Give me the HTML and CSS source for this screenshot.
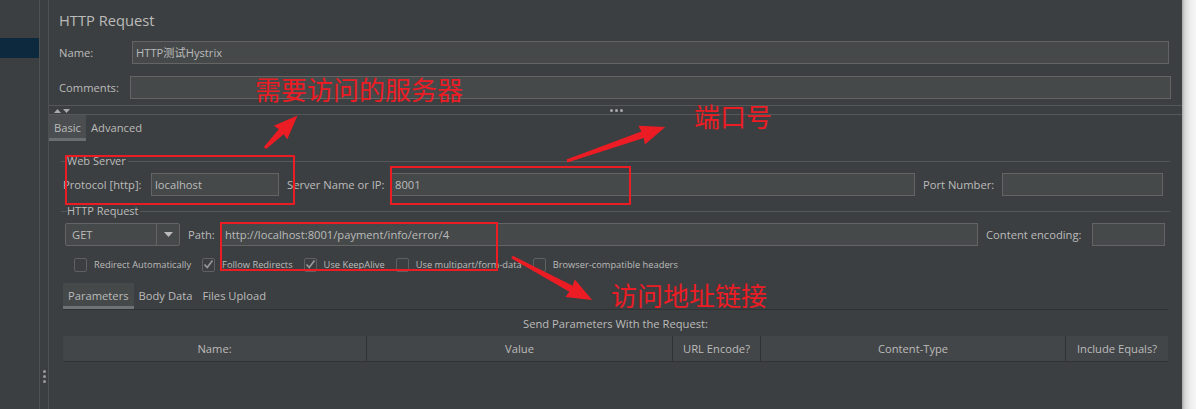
FILE: index.html
```html
<!DOCTYPE html>
<html>
<head>
<meta charset="utf-8">
<link rel="stylesheet" href="styles.css">
</head>
<body>
<div class="screen">
  <div class="window">
    <div class="tree">
      <div class="tree-sel"></div>
    </div>
    <div class="vsplit">
      <span class="vdot"></span><span class="vdot"></span><span class="vdot"></span>
    </div>
    <div class="main">
      <div class="head">
        <div class="title">HTTP Request</div>
        <div class="row name-row">
          <span class="lbl lbl-name">Name:</span>
          <div class="input grow">HTTP测试Hystrix</div>
        </div>
        <div class="row comments-row">
          <span class="lbl lbl-comments">Comments:</span>
          <div class="input grow"></div>
        </div>
      </div>
      <div class="hsplit">
        <div class="hs-arrows">
          <svg width="16" height="6" viewBox="0 0 16 6"><path d="M0 5 L3.5 1 L7 5 Z" fill="#a9a9a9"/><path d="M9 1 L16 1 L12.5 5 Z" fill="#a9a9a9"/></svg>
        </div>
        <div class="hs-dots"><span></span><span></span><span></span></div>
      </div>
      <div class="tabs">
        <div class="tab active">Basic</div>
        <div class="tab">Advanced</div>
      </div>
      <div class="content">
        <div class="legend"><span class="lg-pre"></span><span class="lg-txt">Web Server</span><span class="lg-line"></span></div>
        <div class="row ws-row">
          <span class="lbl w-proto">Protocol [http]:</span>
          <div class="input w128">localhost</div>
          <span class="lbl w-server">Server Name or IP:</span>
          <div class="input grow">8001</div>
          <span class="lbl w-port">Port Number:</span>
          <div class="input w161"></div>
        </div>
        <div class="legend legend2"><span class="lg-pre"></span><span class="lg-txt">HTTP Request</span><span class="lg-line"></span></div>
        <div class="row req-row">
          <div class="combo"><span class="combo-val">GET</span><span class="combo-btn"><svg width="9" height="5" viewBox="0 0 9 5"><path d="M0 0 L9 0 L4.5 5 Z" fill="#bbbbbb"/></svg></span></div>
          <span class="lbl w-path">Path:</span>
          <div class="input grow">http://localhost:8001/payment/info/error/4</div>
          <span class="lbl w-enc">Content encoding:</span>
          <div class="input w73"></div>
        </div>
        <div class="checks">
          <label class="chk"><span class="box"></span>Redirect Automatically</label>
          <label class="chk"><span class="box"><svg width="11" height="11" viewBox="0 0 11 11"><path d="M1.5 5.5 L4.2 8.5 L9.5 1.5" fill="none" stroke="#9a9a9a" stroke-width="1.6"/></svg></span>Follow Redirects</label>
          <label class="chk"><span class="box"><svg width="11" height="11" viewBox="0 0 11 11"><path d="M1.5 5.5 L4.2 8.5 L9.5 1.5" fill="none" stroke="#9a9a9a" stroke-width="1.6"/></svg></span>Use KeepAlive</label>
          <label class="chk"><span class="box"></span>Use multipart/form-data</label>
          <label class="chk"><span class="box"></span>Browser-compatible headers</label>
        </div>
        <div class="subtabs">
          <div class="stab active">Parameters</div>
          <div class="stab">Body Data</div>
          <div class="stab">Files Upload</div>
        </div>
        <div class="send">Send Parameters With the Request:</div>
        <div class="thead">
          <div class="th">Name:</div>
          <div class="th">Value</div>
          <div class="th">URL Encode?</div>
          <div class="th">Content-Type</div>
          <div class="th last">Include Equals?</div>
        </div>
      </div>
    </div>
  </div>
  <div class="shadow"></div>

  <div class="mark box1"></div>
  <div class="mark box2"></div>
  <div class="mark box3"></div>
  <div class="note note1">需要访问的服务器</div>
  <div class="note note2">端口号</div>
  <div class="note note3">访问地址链接</div>
  <svg class="arrows" width="1196" height="409" viewBox="0 0 1196 409">
    <g transform="translate(265 148) rotate(-45)">
      <polygon points="0,-1.5 23,-3.5 22,-9.5 46,0 22,9.5 23,3.5 0,1.5" fill="#ec1c24"/>
    </g>
    <g transform="translate(567 161) rotate(-19.13)">
      <polygon points="0,-1.5 80,-3.5 79,-10 104,0 79,10 80,3.5 0,1.5" fill="#ec1c24"/>
    </g>
    <g transform="translate(512 257) rotate(28.26)">
      <polygon points="0,-1.5 67,-3.5 66,-10 91,0 66,10 67,3.5 0,1.5" fill="#ec1c24"/>
    </g>
  </svg>
</div>
</body>
</html>
```
FILE: styles.css
```css
* { box-sizing: border-box; }
html, body { margin: 0; padding: 0; }
body {
  width: 1196px;
  height: 409px;
  overflow: hidden;
  font-family: "Open Sans", "Noto Sans CJK SC", sans-serif;
  font-size: 11.2px;
  color: #bbbbbb;
  background: #3c3f41;
}
.screen {
  position: relative;
  width: 1196px;
  height: 409px;
  display: flex;
}
.window {
  width: 1182px;
  height: 409px;
  display: flex;
  background: #3c3f41;
}
.shadow {
  flex: 1;
  background: linear-gradient(to right, #a9a9a9 0, #d6d6d6 3px, #ececec 8px, #f6f6f6 100%);
}
.tree {
  width: 40px;
  border-right: 1px solid #4e5052;
  padding-top: 38px;
}
.tree-sel {
  height: 20px;
  background: #0d293e;
}
.vsplit {
  width: 9px;
  border-right: 1px solid #4e5052;
  display: flex;
  flex-direction: column;
  align-items: center;
  padding-top: 370px;
  gap: 2px;
}
.vdot {
  width: 3px;
  height: 3px;
  border-radius: 50%;
  background: #9a9a9a;
}
.main {
  flex: 1;
  display: flex;
  flex-direction: column;
}
.head {
  padding: 0 11px 0 10px;
}
.title {
  font-size: 14.7px;
  line-height: 20px;
  padding-top: 10px;
  height: 41px;
}
.row {
  display: flex;
  align-items: center;
}
.lbl { white-space: nowrap; }
.input {
  height: 23px;
  background: #45494a;
  border: 1px solid #646464;
  line-height: 21px;
  padding-left: 3px;
  white-space: nowrap;
  overflow: hidden;
}
.grow { flex: 1; }
.lbl-name { width: 73px; }
.name-row .input { margin-right: 2px; }
.comments-row { margin-top: 12px; }
.lbl-comments { width: 71px; }

.hsplit {
  margin-top: 6px;
  height: 10px;
  border-top: 1px solid #555759;
  border-bottom: 1px solid #555759;
  display: flex;
  align-items: center;
  position: relative;
}
.hs-arrows {
  padding-left: 5px;
  padding-top: 1px;
  display: flex;
}
.hs-dots {
  position: absolute;
  left: 561px;
  top: 3px;
  display: flex;
  gap: 2px;
}
.hs-dots span {
  width: 3px;
  height: 3px;
  border-radius: 50%;
  background: #a9a9a9;
}
.tabs {
  display: flex;
  height: 26px;
}
.tab {
  padding: 2px 5px 0 5px;
  line-height: 22px;
  height: 26px;
}
.tab.active {
  background: #4a4e50;
  border-bottom: 3px solid #6b6e70;
}
.content {
  padding: 0 12px;
}
.legend {
  display: flex;
  align-items: center;
  height: 14px;
  margin-top: 13px;
  font-size: 11px;
}
.legend2 { margin-top: 8px; }
.lg-pre {
  width: 6px;
  height: 1px;
  background: #555759;
}
.lg-txt {
  padding: 0 2px 0 0;
  line-height: 14px;
}
.lg-line {
  flex: 1;
  height: 1px;
  background: #555759;
}
.ws-row { margin-top: 5px; padding-left: 2px; padding-right: 7px; }
.w-proto { width: 88px; }
.w128 { width: 128px; }
.w-server { width: 104px; margin-left: 8px; }
.w-port { width: 79px; margin-left: 8px; }
.w161 { width: 161px; }

.req-row { margin-top: 5px; padding-left: 4px; padding-right: 5px; }
.combo {
  width: 115px;
  height: 23px;
  border: 1px solid #646464;
  border-radius: 2px;
  background: #45494a;
  display: flex;
}
.combo-val {
  flex: 1;
  padding-left: 6px;
  line-height: 21px;
  border-right: 1px solid #646464;
}
.combo-btn {
  width: 22px;
  display: flex;
  align-items: center;
  justify-content: center;
}
.w-path { width: 33px; margin-left: 8px; }
.w-enc { width: 106px; margin-left: 8px; }
.w73 { width: 73px; }

.checks {
  display: flex;
  align-items: center;
  margin-top: 10px;
  height: 17px;
  padding-left: 13px;
  font-size: 9.3px;
  gap: 11px;
}
.chk {
  display: flex;
  align-items: center;
  gap: 7px;
  white-space: nowrap;
}
.box {
  width: 13px;
  height: 14px;
  border: 1px solid #5e6062;
  border-radius: 2px;
  background: #3c3f41;
  display: flex;
  align-items: center;
  justify-content: center;
}
.subtabs {
  margin-top: 10px;
  margin-left: 2px;
  margin-right: 2px;
  display: flex;
  height: 27px;
  border-bottom: 1px solid #2f3133;
}
.stab {
  padding: 0 5px;
  line-height: 25px;
  height: 26px;
}
.stab.active {
  background: #45494a;
  border-bottom: 3px solid #707375;
}
.send {
  text-align: center;
  line-height: 16px;
  margin-top: 6px;
}
.thead {
  margin: 4px 2px 0 2px;
  display: grid;
  grid-template-columns: 304px 306px 88px 305px 1fr;
  height: 26px;
  background: #434648;
  border-bottom: 1px solid #2f3133;
}
.th {
  text-align: center;
  line-height: 25px;
  border-right: 1px solid #2f3133;
  white-space: nowrap;
}
.th.last { border-right: none; }

.mark {
  position: absolute;
  border: 2px solid #ec1c24;
}
.box1 { left: 65px; top: 155px; width: 230px; height: 50px; }
.box2 { left: 390px; top: 166px; width: 241px; height: 39px; }
.box3 { left: 220px; top: 222px; width: 278px; height: 49px; }
.note {
  position: absolute;
  font-family: "Noto Sans CJK SC", sans-serif;
  font-size: 26px;
  line-height: 30px;
  color: #ec1c24;
  white-space: nowrap;
}
.note1 { left: 255px; top: 74px; }
.note2 { left: 694px; top: 101px; }
.note3 { left: 611px; top: 280px; }
.arrows {
  position: absolute;
  left: 0;
  top: 0;
  pointer-events: none;
}
```
